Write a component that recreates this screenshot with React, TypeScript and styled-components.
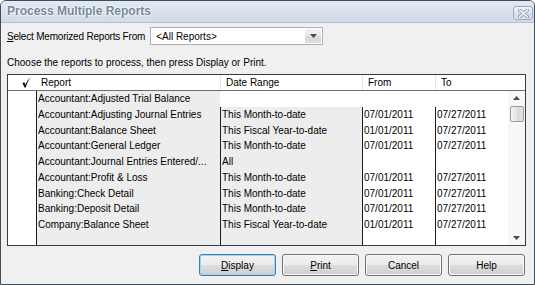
import React from 'react';
import styled, { createGlobalStyle } from 'styled-components';

const Global = createGlobalStyle`
  html, body { margin: 0; padding: 0; background: #ffffff; }
  body { font-family: "Liberation Sans", Arial, sans-serif; font-size: 10px; color: #000; }
  * { box-sizing: border-box; }
`;

const Window = styled.div`
  width: 535px;
  height: 285px;
  border: 1px solid #434d58;
  border-radius: 6px 6px 0 0;
  background: #f0f0f0;
  display: flex;
  flex-direction: column;
  overflow: hidden;
`;

const TitleBar = styled.div`
  height: 22px;
  flex: none;
  border-bottom: 1px solid #b3c0ce;
  background: linear-gradient(#e2eaf4, #cfdbe8);
  display: flex;
  align-items: flex-start;
  justify-content: space-between;
  padding: 0 1px 0 6px;
`;

const Title = styled.div`
  font-weight: bold;
  font-size: 12px;
  line-height: 21px;
  color: #7a8894;
  text-shadow: 0 0 3px #ffffff, 0 0 2px #ffffff;
`;

const CloseButton = styled.div`
  margin-top: 5px;
  width: 20px;
  height: 14px;
  border: 1px solid #9aa9ba;
  border-radius: 3px;
  background: linear-gradient(#f1f4f8, #dfe6ee 50%, #d3dce6 51%, #dbe3ec);
  display: flex;
  align-items: center;
  justify-content: center;
`;

const Content = styled.div`
  flex: 1;
  display: flex;
  flex-direction: column;
  padding: 4px 8px 0 6px;
`;

const SelectRow = styled.div`
  display: flex;
  align-items: center;
  height: 18px;
  gap: 5px;
`;

const Label = styled.span`
  letter-spacing: -0.2px;
  white-space: nowrap;
`;

const Dropdown = styled.div`
  width: 173px;
  height: 18px;
  border: 1px solid #abb1b8;
  background: #ffffff;
  display: flex;
  align-items: center;
  justify-content: space-between;
  padding-left: 5px;
`;

const DropArrow = styled.div`
  width: 16px;
  height: 14px;
  margin-right: 1px;
  background: linear-gradient(#f3f3f3, #e6e6e6 50%, #d8d8d8 51%, #dedede);
  display: flex;
  align-items: center;
  justify-content: center;
`;

const Instruction = styled.div`
  margin-top: 12px;
  line-height: 12px;
  white-space: nowrap;
`;

const Table = styled.div`
  margin-top: 5px;
  height: 172px;
  width: 519px;
  border: 1px solid #3a3a3a;
  background: #ffffff;
  display: flex;
  flex-direction: column;
`;

const Header = styled.div`
  height: 16px;
  flex: none;
  border-bottom: 1px solid #6e6e6e;
  display: flex;
`;

const HeaderCell = styled.div<{ $w?: number; $sep?: boolean }>`
  ${(p) => (p.$w ? `width: ${p.$w}px; flex: none;` : 'flex: 1;')}
  border-left: ${(p) => (p.$sep ? '1px solid #e4e4e4' : 'none')};
  padding-left: 5px;
  line-height: 15px;
  white-space: nowrap;
`;

const CheckHead = styled.div`
  width: 28px;
  flex: none;
  display: flex;
  align-items: center;
  padding-left: 14px;
`;

const Body = styled.div`
  flex: 1;
  display: flex;
  min-height: 0;
`;

const Rows = styled.div`
  width: 500px;
  flex: none;
  display: flex;
  flex-direction: column;
`;

const Row = styled.div<{ $fill?: boolean }>`
  display: flex;
  ${(p) => (p.$fill ? 'flex: 1;' : 'height: 15.75px; flex: none;')}
`;

const Cell = styled.div<{ $w: number; $line?: boolean; $shade?: boolean }>`
  width: ${(p) => p.$w}px;
  flex: none;
  border-left: ${(p) => (p.$line ? '1px solid #1e1e1e' : '1px solid transparent')};
  background: ${(p) => (p.$shade ? '#ededed' : '#ffffff')};
  padding-left: 1px;
  line-height: 15.75px;
  white-space: nowrap;
  overflow: hidden;
`;

const ScrollBar = styled.div`
  width: 17px;
  flex: none;
  background: #f7f7f7;
  display: flex;
  flex-direction: column;
  align-items: center;
`;

const ScrollArrow = styled.div`
  height: 14px;
  width: 17px;
  flex: none;
  display: flex;
  align-items: center;
  justify-content: center;
`;

const Thumb = styled.div`
  width: 14px;
  height: 16px;
  margin-top: 1px;
  border: 1px solid #9b9b9b;
  border-radius: 2px;
  background: linear-gradient(90deg, #f4f4f4, #e4e4e4 50%, #d9d9d9 51%, #e2e2e2);
`;

const Spacer = styled.div`
  flex: 1;
`;

const ButtonRow = styled.div`
  margin-top: 8px;
  display: flex;
  justify-content: flex-end;
  gap: 6px;
  padding-right: 1px;
`;

const Button = styled.div<{ $default?: boolean }>`
  width: 77px;
  height: 22px;
  border: 1px solid ${(p) => (p.$default ? '#3c7fb1' : '#707070')};
  border-radius: 3px;
  background: linear-gradient(#f2f2f2, #ebebeb 50%, #dddddd 51%, #cfcfcf);
  box-shadow: ${(p) => (p.$default ? 'inset 0 0 0 1px #a6d4ef' : 'inset 0 0 0 1px #fbfbfb')};
  display: flex;
  align-items: center;
  justify-content: center;
  font-size: 10px;
`;

const Tri = ({ up }: { up?: boolean }) => (
  <svg width="7" height="4" viewBox="0 0 7 4">
    <path d={up ? 'M0 4 L3.5 0 L7 4 Z' : 'M0 0 L3.5 4 L7 0 Z'} fill="#4a4a4a" />
  </svg>
);

const CheckIcon = () => (
  <svg width="9" height="11" viewBox="0 0 9 11">
    <path d="M0.4 6.2 L2.3 5.1 L3.3 7.8 C4.5 5 6.2 2.4 8.8 0.3 C6.6 3 5 6.4 3.8 10.6 L2.6 10.6 Z" fill="#111" />
  </svg>
);

const CloseGlyph = () => (
  <svg width="11" height="9" viewBox="0 0 11 9">
    <path d="M1.5 1.2 L9.5 7.8 M9.5 1.2 L1.5 7.8" stroke="#8d98a4" strokeWidth="3.2" strokeLinecap="round" />
    <path d="M1.5 1.2 L9.5 7.8 M9.5 1.2 L1.5 7.8" stroke="#f4f6f8" strokeWidth="1.6" strokeLinecap="round" />
  </svg>
);

type R = { report: string; range?: string; from?: string; to?: string; bare?: boolean };

const rows: R[] = [
  { report: 'Accountant:Adjusted Trial Balance', bare: true },
  { report: 'Accountant:Adjusting Journal Entries', range: 'This Month-to-date', from: '07/01/2011', to: '07/27/2011' },
  { report: 'Accountant:Balance Sheet', range: 'This Fiscal Year-to-date', from: '01/01/2011', to: '07/27/2011' },
  { report: 'Accountant:General Ledger', range: 'This Month-to-date', from: '07/01/2011', to: '07/27/2011' },
  { report: 'Accountant:Journal Entries Entered/...', range: 'All' },
  { report: 'Accountant:Profit & Loss', range: 'This Month-to-date', from: '07/01/2011', to: '07/27/2011' },
  { report: 'Banking:Check Detail', range: 'This Month-to-date', from: '07/01/2011', to: '07/27/2011' },
  { report: 'Banking:Deposit Detail', range: 'This Month-to-date', from: '07/01/2011', to: '07/27/2011' },
  { report: 'Company:Balance Sheet', range: 'This Fiscal Year-to-date', from: '01/01/2011', to: '07/27/2011' },
];

export default function App() {
  return (
    <>
      <Global />
      <Window>
        <TitleBar>
          <Title>Process Multiple Reports</Title>
          <CloseButton>
            <CloseGlyph />
          </CloseButton>
        </TitleBar>
        <Content>
          <SelectRow>
            <Label>
              <u>S</u>elect Memorized Reports From
            </Label>
            <Dropdown>
              <span>&lt;All Reports&gt;</span>
              <DropArrow>
                <Tri />
              </DropArrow>
            </Dropdown>
          </SelectRow>
          <Instruction>Choose the reports to process, then press Display or Print.</Instruction>
          <Table>
            <Header>
              <CheckHead>
                <CheckIcon />
              </CheckHead>
              <HeaderCell $w={184}>Report</HeaderCell>
              <HeaderCell $w={142} $sep>
                Date Range
              </HeaderCell>
              <HeaderCell $w={73} $sep>
                From
              </HeaderCell>
              <HeaderCell $sep>To</HeaderCell>
            </Header>
            <Body>
              <Rows>
                {rows.map((r) => (
                  <Row key={r.report}>
                    <Cell $w={28} />
                    <Cell $w={184} $line $shade>
                      {r.report}
                    </Cell>
                    <Cell $w={142} $line={!r.bare} $shade={!r.bare}>
                      {r.range}
                    </Cell>
                    <Cell $w={73} $line={!r.bare}>
                      {r.from}
                    </Cell>
                    <Cell $w={73} $line={!r.bare}>
                      {r.to}
                    </Cell>
                  </Row>
                ))}
                <Row $fill>
                  <Cell $w={28} />
                  <Cell $w={184} $line $shade />
                  <Cell $w={142} $line $shade />
                  <Cell $w={73} $line />
                  <Cell $w={73} $line />
                </Row>
              </Rows>
              <ScrollBar>
                <ScrollArrow>
                  <Tri up />
                </ScrollArrow>
                <Thumb />
                <Spacer />
                <ScrollArrow>
                  <Tri />
                </ScrollArrow>
              </ScrollBar>
            </Body>
          </Table>
          <ButtonRow>
            <Button $default>
              <span>
                <u>D</u>isplay
              </span>
            </Button>
            <Button>
              <span>
                <u>P</u>rint
              </span>
            </Button>
            <Button>Cancel</Button>
            <Button>Help</Button>
          </ButtonRow>
        </Content>
      </Window>
    </>
  );
}
